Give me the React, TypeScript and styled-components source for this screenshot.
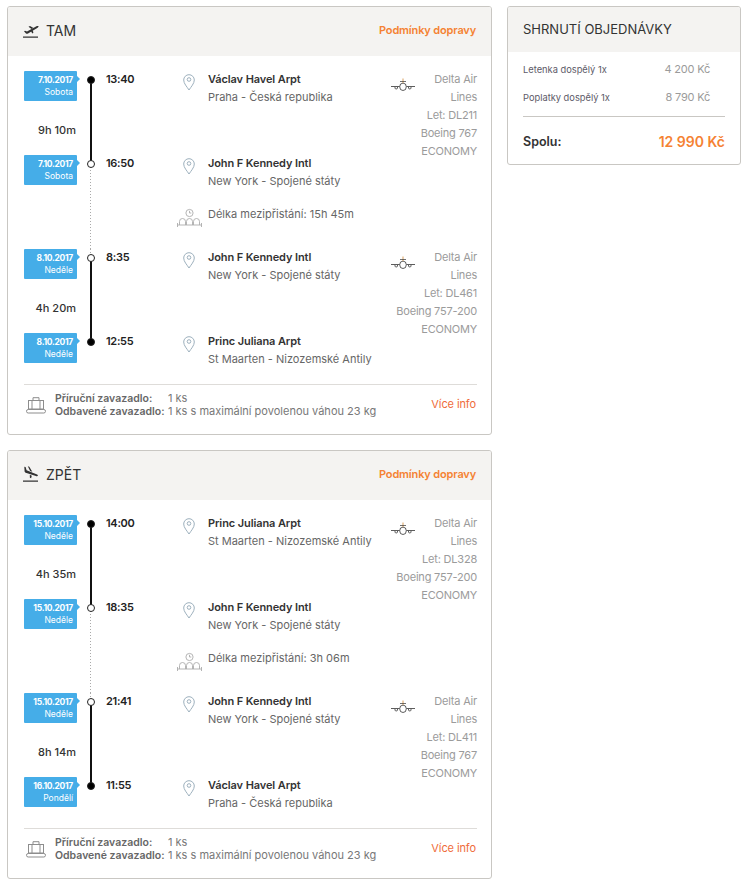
import React from "react";
import styled, { createGlobalStyle } from "styled-components";

interface Stop {
  date: string;
  day: string;
  time: string;
  place: string;
  region: string;
}

interface Segment {
  from: Stop;
  to: Stop;
  duration: string;
  flight: string;
  aircraft: string;
}

interface Journey {
  title: string;
  back?: boolean;
  first: Segment;
  layover: string;
  second: Segment;
}

type RailLine = "none" | "solid" | "dotted";

const PRAGUE = { place: "Václav Havel Arpt", region: "Praha - Česká republika" };
const JFK = { place: "John F Kennedy Intl", region: "New York - Spojené státy" };
const SXM = { place: "Princ Juliana Arpt", region: "St Maarten - Nizozemské Antily" };

const journeys: Journey[] = [
  {
    title: "TAM",
    first: {
      from: { date: "7.10.2017", day: "Sobota", time: "13:40", ...PRAGUE },
      to: { date: "7.10.2017", day: "Sobota", time: "16:50", ...JFK },
      duration: "9h 10m",
      flight: "Let: DL211",
      aircraft: "Boeing 767",
    },
    layover: "Délka mezipřistání: 15h 45m",
    second: {
      from: { date: "8.10.2017", day: "Neděle", time: "8:35", ...JFK },
      to: { date: "8.10.2017", day: "Neděle", time: "12:55", ...SXM },
      duration: "4h 20m",
      flight: "Let: DL461",
      aircraft: "Boeing 757-200",
    },
  },
  {
    title: "ZPĚT",
    back: true,
    first: {
      from: { date: "15.10.2017", day: "Neděle", time: "14:00", ...SXM },
      to: { date: "15.10.2017", day: "Neděle", time: "18:35", ...JFK },
      duration: "4h 35m",
      flight: "Let: DL328",
      aircraft: "Boeing 757-200",
    },
    layover: "Délka mezipřistání: 3h 06m",
    second: {
      from: { date: "15.10.2017", day: "Neděle", time: "21:41", ...JFK },
      to: { date: "16.10.2017", day: "Pondělí", time: "11:55", ...PRAGUE },
      duration: "8h 14m",
      flight: "Let: DL411",
      aircraft: "Boeing 767",
    },
  },
];

const TakeoffIcon = () => (
  <svg width="17" height="16" viewBox="0 0 17 16">
    <path d="M2 9.300l1-.5 2 .8 9.400-5.300c1-.5 1.900-.4 2.100 0 .2.500-.3 1.100-1.200 1.600L6 11.500c-.8.4-1.500.3-2 0z" fill="#333" />
    <path d="M6.500 4.800l1.500-.8 3.500 2-2 1.100zM9 9.200l1.800-1 .6 2.600-1.100.6z" fill="#333" />
    <path d="M1 15.200h15" stroke="#333" strokeWidth="1.200" />
  </svg>
);

const LandingIcon = () => (
  <svg width="17" height="16" viewBox="0 0 17 16">
    <path d="M2.300.8l1.300.3 1 3.200 9.900 3.900c1 .4 1.600 1.100 1.400 1.600-.2.500-1.100.6-2 .2L3.700 6.700c-.6-.3-1-.7-1.100-1.300z" fill="#333" />
    <path d="M5.800.3l1.500.4 3 5.100-2.200-.9zM7.800 8.800l2 .9-.7 2.500-1.200-.5z" fill="#333" />
    <path d="M1 15.200h15" stroke="#333" strokeWidth="1.200" />
  </svg>
);

const PinIcon = () => (
  <svg width="12" height="17" viewBox="0 0 12 17" fill="none" stroke="#9db0bd" strokeWidth="1">
    <path d="M6 16C4 12.800.7 9.600.7 6A5.300 5.300 0 0 1 11.300 6C11.300 9.600 8 12.800 6 16z" />
    <circle cx="6" cy="5.500" r="1.800" />
  </svg>
);

const CarrierIcon = () => (
  <svg width="24" height="13" viewBox="0 0 24 13" fill="none" stroke="#333" strokeWidth="1">
    <path d="M0 8.500h8.500M15.500 8.500H24" strokeWidth=".8" />
    <ellipse cx="12" cy="8.800" rx="3.300" ry="3.700" strokeWidth=".8" />
    <path d="M12 .5V5" stroke="#d9a05f" />
    <path d="M9 3.500h6" strokeWidth=".7" />
    <path d="M4 9v1.200c0 1 2.500 1 2.500 0V9M17.500 9v1.200c0 1 2.500 1 2.500 0V9" strokeWidth=".8" />
  </svg>
);

const LayoverIcon = () => (
  <svg width="25" height="21" viewBox="0 0 25 21" fill="none" stroke="#adadad" strokeWidth=".9">
    <circle cx="12.500" cy="6" r="3.600" />
    <path d="M12.500 3.800V6h1.800" />
    <path d="M.5 20v-4M24.500 20v-4M.5 18h24" />
    <path d="M2.500 18v-3.500a3 3 0 0 1 6 0V18M9.500 18v-3.500a3 3 0 0 1 6 0V18M16.500 18v-3.500a3 3 0 0 1 6 0V18" />
  </svg>
);

const BaggageIcon = () => (
  <svg width="20" height="17" viewBox="0 0 20 17" fill="none" stroke="#8d8d8d" strokeWidth="1">
    <rect x="2.500" y="3.500" width="15" height="8.500" />
    <path d="M7 3.500V.7h6v2.800M6 3.500V12M14 3.500V12" />
    <rect x=".5" y="12.500" width="19" height="3.500" rx="1.700" />
  </svg>
);

const StopRow: React.FC<{ stop: Stop; above: RailLine; below: RailLine; open?: boolean }> = ({
  stop,
  above,
  below,
  open,
}) => (
  <Row>
    <DateBadge>
      <BadgeDate>{stop.date}</BadgeDate>
      <BadgeDay>{stop.day}</BadgeDay>
    </DateBadge>
    <Rail $above={above} $below={below}>
      <Dot $open={open} />
    </Rail>
    <Time>{stop.time}</Time>
    <PinCell>
      <PinIcon />
    </PinCell>
    <Place>
      <PlaceName>{stop.place}</PlaceName>
      <Region>{stop.region}</Region>
    </Place>
  </Row>
);

const SegmentBlock: React.FC<{ segment: Segment; isFirst?: boolean }> = ({ segment, isFirst }) => (
  <SegmentWrap>
    <Stops>
      <StopRow
        stop={segment.from}
        above={isFirst ? "none" : "dotted"}
        below="solid"
        open={!isFirst}
      />
      <DurationRow>
        <Duration>{segment.duration}</Duration>
        <Rail $above="solid" $below="solid" />
      </DurationRow>
      <StopRow
        stop={segment.to}
        above="solid"
        below={isFirst ? "dotted" : "none"}
        open={isFirst}
      />
    </Stops>
    <Carrier>
      <CarrierLogo>
        <CarrierIcon />
      </CarrierLogo>
      <CarrierText>
        <div>
          Delta Air
          <br />
          Lines
        </div>
        <div>{segment.flight}</div>
        <div>{segment.aircraft}</div>
        <div>ECONOMY</div>
      </CarrierText>
    </Carrier>
  </SegmentWrap>
);

const JourneyCard: React.FC<{ journey: Journey }> = ({ journey }) => (
  <Card>
    <CardHeader>
      <HeaderTitle>
        {journey.back ? <LandingIcon /> : <TakeoffIcon />}
        <TitleText>{journey.title}</TitleText>
      </HeaderTitle>
      <Conditions>Podmínky dopravy</Conditions>
    </CardHeader>
    <CardBody>
      <SegmentBlock segment={journey.first} isFirst />
      <LayoverRow>
        <DateSpacer />
        <Rail $above="dotted" $below="dotted" />
        <LayoverIconCell>
          <LayoverIcon />
        </LayoverIconCell>
        <LayoverText>{journey.layover}</LayoverText>
      </LayoverRow>
      <SegmentBlock segment={journey.second} />
      <Footer>
        <BaggageCell>
          <BaggageIcon />
        </BaggageCell>
        <BaggageGrid>
          <BaggageLabel>Příruční zavazadlo:</BaggageLabel>
          <BaggageValue>1 ks</BaggageValue>
          <BaggageLabel>Odbavené zavazadlo:</BaggageLabel>
          <BaggageValue>1 ks s maximální povolenou váhou 23 kg</BaggageValue>
        </BaggageGrid>
        <MoreInfo>Více info</MoreInfo>
      </Footer>
    </CardBody>
  </Card>
);

const App = () => (
  <>
    <GlobalStyle />
    <Page>
      <MainColumn>
        {journeys.map((journey) => (
          <JourneyCard key={journey.title} journey={journey} />
        ))}
      </MainColumn>
      <Summary>
        <SummaryHeader>SHRNUTÍ OBJEDNÁVKY</SummaryHeader>
        <SummaryBody>
          <SummaryRow>
            <SummaryLabel>Letenka dospělý 1x</SummaryLabel>
            <SummaryPrice>4 200 Kč</SummaryPrice>
          </SummaryRow>
          <SummaryRow>
            <SummaryLabel>Poplatky dospělý 1x</SummaryLabel>
            <SummaryPrice>8 790 Kč</SummaryPrice>
          </SummaryRow>
          <TotalRow>
            <TotalLabel>Spolu:</TotalLabel>
            <TotalPrice>12 990 Kč</TotalPrice>
          </TotalRow>
        </SummaryBody>
      </Summary>
    </Page>
  </>
);

const railLayer = (line: RailLine) => {
  if (line === "solid") return "linear-gradient(#111, #111)";
  if (line === "dotted") return "repeating-linear-gradient(#aaa 0 1px, transparent 1px 3px)";
  return "none";
};

const GlobalStyle = createGlobalStyle`
  html, body {
    margin: 0;
    background: #fff;
    font-family: "Inter", "Open Sans", sans-serif;
    color: #333;
  }
`;

const Page = styled.div`
  display: flex;
  align-items: flex-start;
  gap: 15px;
  width: 745px;
  height: 890px;
  padding: 6px 0 0 7px;
  box-sizing: border-box;
`;

const MainColumn = styled.div`
  display: flex;
  flex-direction: column;
  gap: 15px;
  width: 485px;
`;

const Card = styled.section`
  border: 1px solid #c9c7c3;
  border-radius: 3px;
  overflow: hidden;
`;

const CardHeader = styled.header`
  display: flex;
  align-items: center;
  justify-content: space-between;
  height: 46px;
  padding: 0 15px 3px 14px;
  background: #f4f3f1;
`;

const HeaderTitle = styled.div`
  display: flex;
  align-items: center;
  gap: 7px;
`;

const TitleText = styled.span`
  font-size: 14px;
  color: #333;
`;

const Conditions = styled.span`
  font-size: 11px;
  font-weight: 600;
  letter-spacing: -0.15px;
  color: #f58233;
`;

const CardBody = styled.div`
  padding: 15px 14px 16px 16px;
`;

const SegmentWrap = styled.div`
  display: flex;
  justify-content: space-between;
`;

const Stops = styled.div`
  display: flex;
  flex-direction: column;
`;

const Row = styled.div`
  display: flex;
  height: 30px;
`;

const DateBadge = styled.div`
  position: relative;
  display: flex;
  flex-direction: column;
  align-items: flex-end;
  justify-content: center;
  flex: none;
  width: 53px;
  height: 30px;
  margin-right: 10px;
  padding-right: 4px;
  box-sizing: border-box;
  background: #45ade8;
  border-radius: 1px;
  color: #fff;

  &::after {
    content: "";
    position: absolute;
    top: 5px;
    right: -3px;
    border-left: 3px solid #45ade8;
    border-top: 3px solid transparent;
    border-bottom: 3px solid transparent;
  }
`;

const BadgeDate = styled.span`
  font-size: 8.500px;
  font-weight: 700;
  line-height: 12px;
  letter-spacing: -0.3px;
`;

const BadgeDay = styled.span`
  font-size: 8.500px;
  line-height: 12px;
`;

const Rail = styled.div<{ $above: RailLine; $below: RailLine }>`
  flex: none;
  width: 8px;
  background-image: ${(p) => railLayer(p.$above)}, ${(p) => railLayer(p.$below)};
  background-repeat: no-repeat;
  background-position: 3px 0, 3px 9px;
  background-size: ${(p) => (p.$above === "solid" ? "2px" : "1px")} 9px,
    ${(p) => (p.$below === "solid" ? "2px" : "1px")} calc(100% - 9px);
`;

const Dot = styled.div<{ $open?: boolean }>`
  width: 8px;
  height: 8px;
  margin-top: 5px;
  box-sizing: border-box;
  border-radius: 50%;
  background: ${(p) => (p.$open ? "#fff" : "#000")};
  border: 1px solid #222;
`;

const Time = styled.div`
  flex: none;
  width: 77px;
  margin-left: 11px;
  margin-top: -1px;
  font-size: 11px;
  font-weight: 600;
  letter-spacing: -0.3px;
  line-height: 18px;
  color: #222;
`;

const PinCell = styled.div`
  flex: none;
  width: 25px;
  padding-top: 3px;
`;

const Place = styled.div`
  margin-top: -1px;
  font-size: 11px;
  line-height: 18px;
  white-space: nowrap;
`;

const PlaceName = styled.div`
  font-weight: 600;
  letter-spacing: -0.1px;
  color: #333;
`;

const Region = styled.div`
  color: #666;
`;

const DurationRow = styled.div`
  display: flex;
  height: 54px;
`;

const Duration = styled.div`
  flex: none;
  width: 53px;
  margin-right: 10px;
  padding: 20px 1px 0 0;
  box-sizing: border-box;
  text-align: right;
  font-size: 11px;
  font-weight: 500;
  line-height: 18px;
  color: #333;
`;

const Carrier = styled.div`
  display: grid;
  width: 86px;
  margin-top: -1px;
`;

const CarrierLogo = styled.div`
  grid-area: 1 / 1;
  justify-self: start;
  margin-top: 5px;
`;

const CarrierText = styled.div`
  grid-area: 1 / 1;
  text-align: right;
  font-size: 11px;
  letter-spacing: -0.2px;
  line-height: 18px;
  color: #9b9b9b;
  white-space: nowrap;
`;

const LayoverRow = styled.div`
  display: flex;
  height: 64px;
`;

const DateSpacer = styled.div`
  flex: none;
  width: 63px;
`;

const LayoverIconCell = styled.div`
  flex: none;
  width: 31px;
  margin-left: 82px;
  padding-top: 22px;
`;

const LayoverText = styled.div`
  padding-top: 20px;
  font-size: 11px;
  line-height: 18px;
  color: #666;
`;

const Footer = styled.footer`
  display: flex;
  align-items: center;
  margin-top: 21px;
  padding-top: 7px;
  border-top: 1px solid #dedcd9;
`;

const BaggageCell = styled.div`
  flex: none;
  width: 29px;
  height: 17px;
  margin-left: 2px;
  line-height: 0;
`;

const BaggageGrid = styled.div`
  display: grid;
  grid-template-columns: 113px auto;
  font-size: 11px;
  line-height: 13px;
  color: #777;
`;

const BaggageLabel = styled.span`
  font-size: 10.500px;
  font-weight: 600;
  white-space: nowrap;
  color: #666;
`;

const BaggageValue = styled.span`
  white-space: nowrap;
`;

const MoreInfo = styled.span`
  margin: 0 1px 2px auto;
  font-size: 11px;
  letter-spacing: -0.1px;
  color: #ef6c3a;
`;

const Summary = styled.aside`
  width: 234px;
  border: 1px solid #c9c7c3;
  border-radius: 3px;
  box-sizing: border-box;
  overflow: hidden;
`;

const SummaryHeader = styled.header`
  display: flex;
  align-items: center;
  height: 43px;
  padding: 0 0 2px 15px;
  background: #f4f3f1;
  font-size: 13px;
  color: #333;
`;

const SummaryBody = styled.div`
  padding: 3px 15px 14px;
`;

const SummaryRow = styled.div`
  display: flex;
  justify-content: space-between;
  align-items: center;
  height: 28px;
  padding-right: 15px;
`;

const SummaryLabel = styled.span`
  font-size: 9.300px;
  color: #5d5a68;
`;

const SummaryPrice = styled.span`
  font-size: 11px;
  letter-spacing: -0.2px;
  color: #9b9b9b;
`;

const TotalRow = styled.div`
  display: flex;
  justify-content: space-between;
  align-items: center;
  margin-top: 5px;
  padding-top: 16px;
  border-top: 1px solid #c9c7c3;
`;

const TotalLabel = styled.span`
  font-size: 12.500px;
  font-weight: 600;
  color: #333;
`;

const TotalPrice = styled.span`
  font-size: 14px;
  font-weight: 600;
  color: #f58233;
`;

export default App;
